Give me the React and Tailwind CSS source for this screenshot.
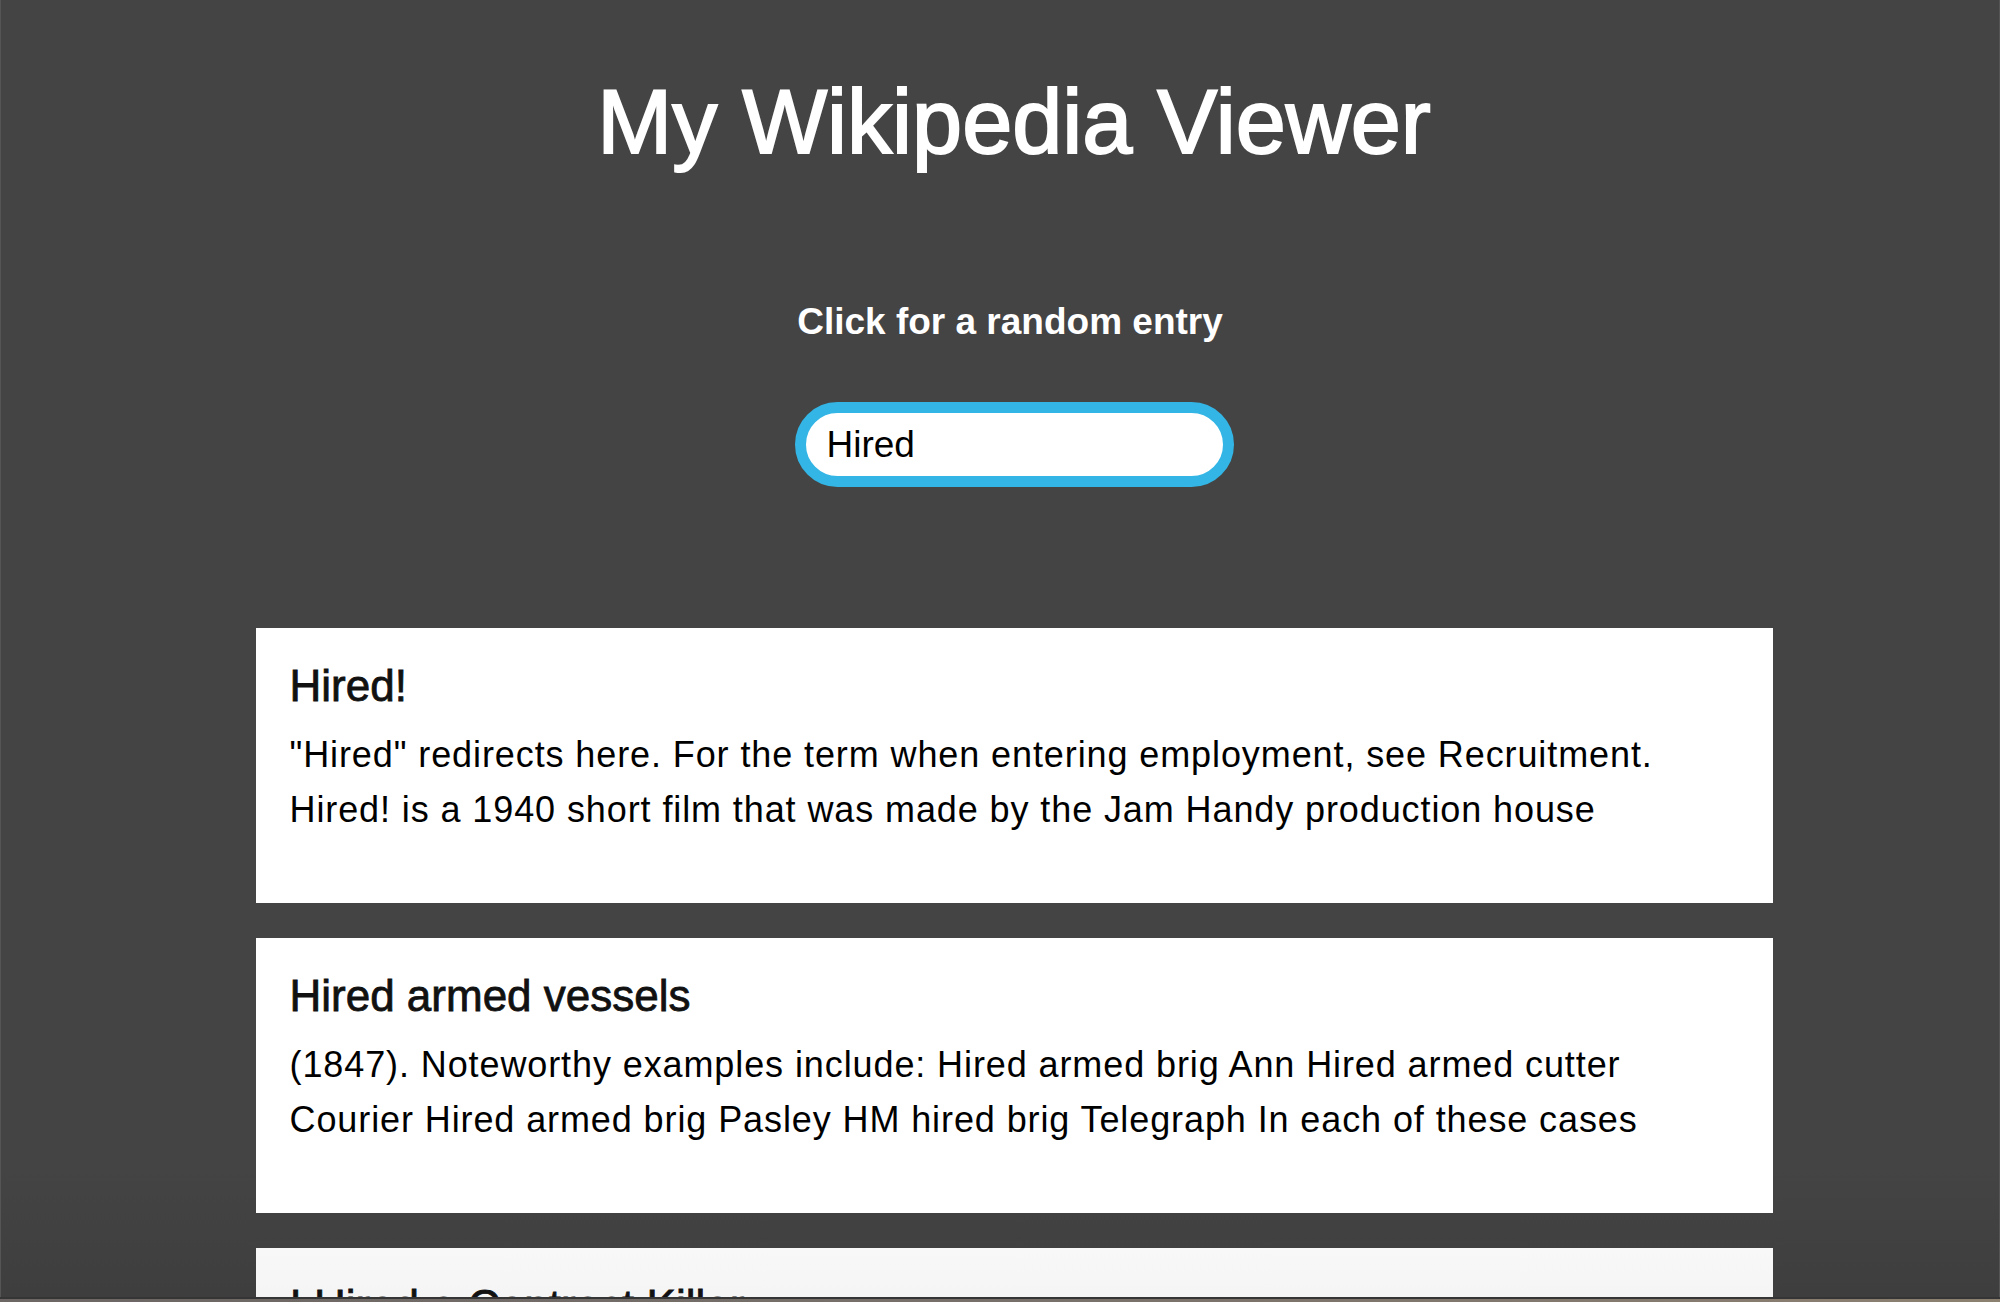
import React, { useState } from 'react';

const results = [
  {
    title: 'Hired!',
    snippet:
      '"Hired" redirects here. For the term when entering employment, see Recruitment. Hired! is a 1940 short film that was made by the Jam Handy production house',
  },
  {
    title: 'Hired armed vessels',
    snippet:
      '(1847). Noteworthy examples include: Hired armed brig Ann Hired armed cutter Courier Hired armed brig Pasley HM hired brig Telegraph In each of these cases',
  },
  {
    title: 'I Hired a Contract Killer',
    snippet:
      'I Hired a Contract Killer is a 1990 film directed by Aki Kaurismäki.',
    faded: true,
  },
];

function ResultCard({ title, snippet, faded }) {
  return (
    <div
      className={
        'w-[1517px] h-[275px] shrink-0 px-[34px] pt-[32px] text-black ' +
        (faded ? 'bg-gradient-to-b from-[#f8f8f8] to-[#e6e6e6]' : 'bg-white')
      }
    >
      <h2 className="text-[44px] leading-[52px] font-normal text-[#111] [-webkit-text-stroke:0.8px_#111]">
        {title}
      </h2>
      <p className="mt-[15px] max-w-[1420px] text-[36px] leading-[55px] tracking-[0.025em]">
        {snippet}
      </p>
    </div>
  );
}

export default function App() {
  const [query, setQuery] = useState('Hired');

  return (
    <div className="h-[1302px] w-full overflow-hidden bg-[#444444] font-['Liberation_Sans',Arial,sans-serif]">
      <div className="h-[1297px] overflow-hidden border-x border-[#555555] bg-gradient-to-b from-[#444444] from-90% to-[#3e3e3e]">
        <div className="flex flex-col items-center pl-[28px]">
          {/* Header */}
          <h1 className="pt-[77px] text-[90px] leading-[90px] font-normal text-white [-webkit-text-stroke:2px_white]">
            My Wikipedia Viewer
          </h1>

          <a
            href="#"
            className="mt-[136px] -ml-[8px] text-[37px] leading-[37px] font-bold text-white"
          >
            Click for a random entry
          </a>

          {/* Search */}
          <input
            type="text"
            value={query}
            onChange={(e) => setQuery(e.target.value)}
            className="mt-[62px] h-[85px] w-[439px] rounded-full border-[11px] border-[#33b5e5] bg-white px-[21px] text-[37px] text-black outline-none"
          />

          {/* Results */}
          <div className="mt-[141px] flex flex-col gap-[35px]">
            {results.map((r) => (
              <ResultCard key={r.title} {...r} />
            ))}
          </div>
        </div>
      </div>
      <div className="h-[5px] border-t-2 border-[#353535] bg-gradient-to-r from-[#6c6664] via-[#77706a] to-[#8c8070]" />
    </div>
  );
}
